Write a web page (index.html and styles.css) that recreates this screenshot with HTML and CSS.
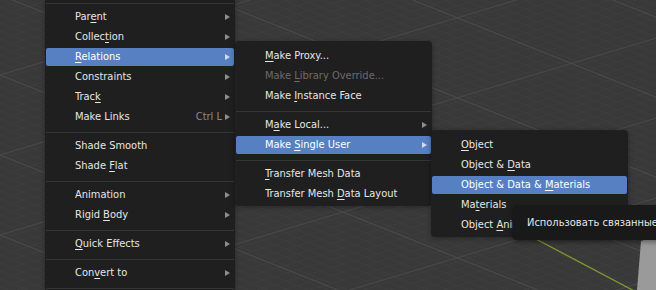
FILE: index.html
```html
<!DOCTYPE html>
<html>
<head>
<meta charset="utf-8">
<link rel="stylesheet" href="styles.css">
</head>
<body>
<div class="viewport">
  <svg class="grid" width="656" height="290" viewBox="0 0 656 290">
    <defs>
      <pattern id="minor" patternUnits="userSpaceOnUse" width="0.1" height="0.1" patternTransform="matrix(114.3 45.7 114.3 -34.3 0 115)">
        <path d="M0 0.05H0.1M0.05 0V0.1" stroke="#3f3f3f" stroke-width="0.007" fill="none"/>
      </pattern>
      <pattern id="major" patternUnits="userSpaceOnUse" width="1" height="1" patternTransform="matrix(114.3 45.7 114.3 -34.3 0 115)">
        <path d="M0 0.5H1M0.5 0V1" stroke="#4b4b4b" stroke-width="0.011" fill="none"/>
      </pattern>
    </defs>
    <rect width="656" height="290" fill="#393939"/>
    <rect width="656" height="290" fill="url(#minor)"/>
    <rect width="656" height="290" fill="url(#major)"/>
    <line x1="515" y1="228" x2="640" y2="294" stroke="#7d9b2f" stroke-width="1.3"/>
    <polygon points="641,241 656,236 656,290 637,290" fill="#9a9a9a"/>
  </svg>

  <div class="menu menu-main">
    <div class="sep"></div>
    <div class="item"><span class="label">Par<u>e</u>nt</span><i class="arrow"></i></div>
    <div class="item"><span class="label">Collec<u>t</u>ion</span><i class="arrow"></i></div>
    <div class="item active"><span class="label"><u>R</u>elations</span><i class="arrow"></i></div>
    <div class="item"><span class="label">Constraints</span><i class="arrow"></i></div>
    <div class="item"><span class="label">Trac<u>k</u></span><i class="arrow"></i></div>
    <div class="item"><span class="label">Make Links</span><span class="shortcut">Ctrl L</span><i class="arrow"></i></div>
    <div class="sep"></div>
    <div class="item"><span class="label">Shade Smooth</span></div>
    <div class="item"><span class="label">Shade <u>F</u>lat</span></div>
    <div class="sep"></div>
    <div class="item"><span class="label">Animation</span><i class="arrow"></i></div>
    <div class="item"><span class="label">Rigid <u>B</u>ody</span><i class="arrow"></i></div>
    <div class="sep"></div>
    <div class="item"><span class="label"><u>Q</u>uick Effects</span><i class="arrow"></i></div>
    <div class="sep"></div>
    <div class="item"><span class="label">Con<u>v</u>ert to</span><i class="arrow"></i></div>
    <div class="sep"></div>
  </div>

  <div class="menu menu-rel">
    <div class="item"><span class="label"><u>M</u>ake Proxy...</span></div>
    <div class="item disabled"><span class="label">Make <u>L</u>ibrary Override...</span></div>
    <div class="item"><span class="label">Make <u>I</u>nstance Face</span></div>
    <div class="sep"></div>
    <div class="item"><span class="label">M<u>a</u>ke Local...</span><i class="arrow"></i></div>
    <div class="item active"><span class="label">Make <u>S</u>ingle User</span><i class="arrow"></i></div>
    <div class="sep"></div>
    <div class="item"><span class="label"><u>T</u>ransfer Mesh Data</span></div>
    <div class="item"><span class="label">Transfer Mesh <u>D</u>ata Layout</span></div>
  </div>

  <div class="menu menu-single">
    <div class="item"><span class="label"><u>O</u>bject</span></div>
    <div class="item"><span class="label">Object &amp; <u>D</u>ata</span></div>
    <div class="item active"><span class="label">Object &amp; Data &amp; <u>M</u>aterials</span></div>
    <div class="item"><span class="label">Ma<u>t</u>erials</span></div>
    <div class="item"><span class="label clipped">Object <u>A</u>nimation</span></div>
  </div>

  <div class="tooltip">Использовать связанные данные</div>
</div>
</body>
</html>
```

FILE: styles.css
```css
* {
  box-sizing: border-box;
}

body {
  margin: 0;
  background: #393939;
  font-family: "DejaVu Sans", "Noto Sans", sans-serif;
  font-stretch: condensed;
  font-size: 11px;
  color: #e6e6e6;
  overflow: hidden;
}

.viewport {
  position: relative;
  width: 656px;
  height: 290px;
  overflow: hidden;
}

.grid {
  position: absolute;
  left: 0;
  top: 0;
  display: block;
}

.menu {
  position: absolute;
  display: flex;
  flex-direction: column;
  background: #1f1f1f;
  padding: 5px 1px 2px;
  border-radius: 4px;
  box-shadow: 0 1px 5px rgba(0, 0, 0, 0.35);
}

.menu-main {
  left: 45px;
  top: -2px;
  width: 190px;
  padding: 0 1px;
  border-radius: 0 0 4px 4px;
}

.menu-rel {
  left: 235px;
  top: 41px;
  width: 197px;
}

.menu-single {
  left: 431px;
  top: 130px;
  width: 197px;
}

.item {
  display: flex;
  align-items: center;
  height: 18px;
  margin: 1px 0;
  padding: 0 4px 0 29px;
  line-height: 18px;
  white-space: nowrap;
  border-radius: 2px;
}

.label {
  flex: 1;
  overflow: hidden;
}

.label.clipped {
  flex: 0 0 52px;
}

.item.active {
  background: #5680c2;
  color: #ffffff;
}

.item.disabled {
  color: #6c6c6c;
}

.shortcut {
  color: #8a8a8a;
  margin-right: 3px;
}

.arrow {
  width: 0;
  height: 0;
  border-left: 5px solid #8e8e8e;
  border-top: 3px solid transparent;
  border-bottom: 3px solid transparent;
}

.active .arrow {
  border-left-color: #cfdaed;
}

.sep {
  height: 9px;
  padding-top: 5px;
}

.sep::before {
  content: "";
  display: block;
  height: 1px;
  background: #353535;
}

u {
  text-decoration-thickness: 1px;
  text-underline-offset: 2px;
}

.tooltip {
  position: absolute;
  left: 513px;
  top: 205px;
  width: 220px;
  height: 35px;
  padding-left: 14px;
  line-height: 35px;
  white-space: nowrap;
  overflow: hidden;
  background: #191919;
  border-radius: 4px;
  color: #e6e6e6;
  box-shadow: 0 2px 5px rgba(0, 0, 0, 0.4);
}
```
